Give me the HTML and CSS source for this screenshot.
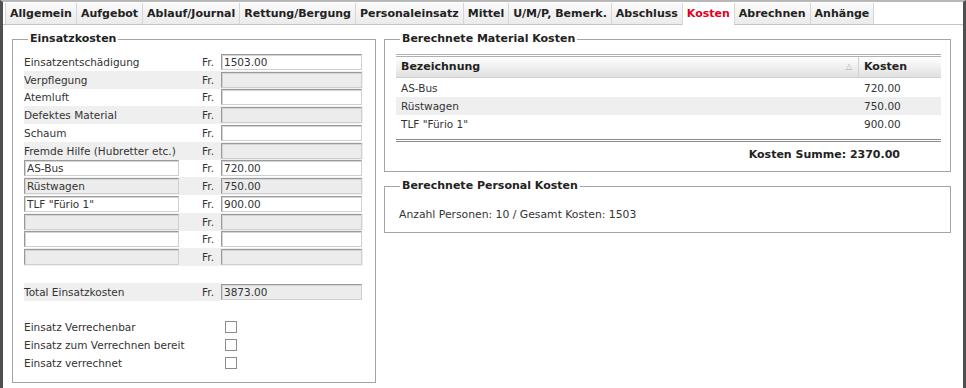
FILE: index.html
```html
<!DOCTYPE html>
<html lang="de">
<head>
    <meta charset="UTF-8">
    <title>Einsatz | Kosten</title>
    <link rel="stylesheet" href="styles.css">
</head>
<body>
<div class="frame">

    <!-- Tabs -->
    <ul class="tabs">
        <li>Allgemein</li>
        <li>Aufgebot</li>
        <li>Ablauf/Journal</li>
        <li>Rettung/Bergung</li>
        <li>Personaleinsatz</li>
        <li>Mittel</li>
        <li>U/M/P, Bemerk.</li>
        <li>Abschluss</li>
        <li class="active">Kosten</li>
        <li>Abrechnen</li>
        <li>Anhänge</li>
    </ul>

    <div class="content">

        <!-- Einsatzkosten -->
        <fieldset class="box costs">
            <legend>Einsatzkosten</legend>

            <div class="row"><span>Einsatzentschädigung</span><span class="cur">Fr.</span><input class="amount" value="1503.00"></div>
            <div class="row odd"><span>Verpflegung</span><span class="cur">Fr.</span><input class="amount"></div>
            <div class="row"><span>Atemluft</span><span class="cur">Fr.</span><input class="amount"></div>
            <div class="row odd"><span>Defektes Material</span><span class="cur">Fr.</span><input class="amount"></div>
            <div class="row"><span>Schaum</span><span class="cur">Fr.</span><input class="amount"></div>
            <div class="row odd"><span>Fremde Hilfe (Hubretter etc.)</span><span class="cur">Fr.</span><input class="amount"></div>
            <div class="row"><input class="name" value="AS-Bus"><span class="cur">Fr.</span><input class="amount" value="720.00"></div>
            <div class="row odd"><input class="name" value="Rüstwagen"><span class="cur">Fr.</span><input class="amount" value="750.00"></div>
            <div class="row"><input class="name" value='TLF "Fürio 1"'><span class="cur">Fr.</span><input class="amount" value="900.00"></div>
            <div class="row odd"><input class="name"><span class="cur">Fr.</span><input class="amount"></div>
            <div class="row"><input class="name"><span class="cur">Fr.</span><input class="amount"></div>
            <div class="row odd"><input class="name"><span class="cur">Fr.</span><input class="amount"></div>

            <div class="row odd total"><span>Total Einsatzkosten</span><span class="cur">Fr.</span><input class="amount" value="3873.00"></div>

            <div class="checks">
                <label class="row"><span>Einsatz Verrechenbar</span><span></span><span class="check"></span></label>
                <label class="row"><span>Einsatz zum Verrechnen bereit</span><span></span><span class="check"></span></label>
                <label class="row"><span>Einsatz verrechnet</span><span></span><span class="check"></span></label>
            </div>
        </fieldset>

        <div class="side">
            <!-- Material -->
            <fieldset class="box material">
                <legend>Berechnete Material Kosten</legend>
                <div class="grid">
                    <div class="grid-head">
                        <span class="col-name">Bezeichnung <i class="sort">&#9651;</i></span>
                        <span class="col-cost">Kosten</span>
                    </div>
                    <div class="grid-body">
                        <div class="grid-row"><span class="col-name">AS-Bus</span><span class="col-cost">720.00</span></div>
                        <div class="grid-row odd"><span class="col-name">Rüstwagen</span><span class="col-cost">750.00</span></div>
                        <div class="grid-row"><span class="col-name">TLF "Fürio 1"</span><span class="col-cost">900.00</span></div>
                    </div>
                </div>
                <div class="sum">Kosten Summe: 2370.00</div>
            </fieldset>

            <!-- Personal -->
            <fieldset class="box personal">
                <legend>Berechnete Personal Kosten</legend>
                <p>Anzahl Personen: 10 / Gesamt Kosten: 1503</p>
            </fieldset>
        </div>

    </div>
</div>
</body>
</html>
```

FILE: styles.css
```css
* {
    margin: 0;
    padding: 0;
    box-sizing: border-box;
}
body {
    font-family: "DejaVu Sans", Verdana, sans-serif;
    font-size: 11px;
    color: #333;
    background: #fff;
}
.frame {
    width: 966px;
    height: 388px;
    border-left: 3px solid #505050;
    border-right: 3px solid #505050;
    border-top: 2px solid #b8b8b8;
    overflow: hidden;
}
/* Tabs */
.tabs {
    list-style: none;
    display: flex;
    height: 23px;
    padding: 1px 0 0 2px;
    border-bottom: 1px solid #c4c4c4;
}
.tabs li {
    padding: 0 4px;
    line-height: 21px;
    font-weight: bold;
    color: #222;
    background: linear-gradient(#fafafa, #ebebeb);
    border-left: 1px solid #d6d6d6;
}
.tabs li:last-child {
    border-right: 1px solid #d6d6d6;
}
.tabs li.active {
    color: #e2001a;
    background: #fff;
    height: 22px;
}
/* Content */
.content {
    display: flex;
    gap: 8px;
    padding: 7px 0 0 9px;
}
.box {
    border: 1px solid #a4a4a4;
    padding: 7px 12px 0 11px;
}
.box legend {
    font-weight: bold;
    color: #222;
    line-height: 14px;
    padding: 0 2px;
    margin-left: 4px;
}
.costs {
    width: 364px;
    height: 351px;
}
.row {
    display: grid;
    grid-template-columns: 156px 41px 141px;
    align-items: center;
    height: 17.75px;
    font-size: 10.5px;
    white-space: nowrap;
}
.row.odd {
    background: #efefef;
}
.cur {
    text-align: right;
    padding-right: 7px;
}
.row input {
    height: 16px;
    font: inherit;
    color: #333;
    padding: 0 2px;
    background: #fff;
    border: 1px solid #9a9a9a;
    border-right-color: #cfcfcf;
    border-bottom-color: #cfcfcf;
    box-shadow: inset 1px 1px 0 #d4d4d4;
}
.row.odd input {
    background: #ececec;
}
.row .name {
    width: 155px;
}
.row .amount {
    width: 141px;
}
.total {
    margin-top: 17px;
    background: linear-gradient(to right, #efefef 197px, transparent 197px) !important;
}
.checks {
    margin-top: 17px;
}
.checks .row {
    height: 18px;
}
.check {
    width: 12px;
    height: 12px;
    margin-left: 4px;
    border: 1px solid #8c8c8c;
    background: #fff;
}
/* Right column */
.side {
    display: flex;
    flex-direction: column;
    gap: 7px;
}
.material {
    width: 567px;
    height: 140px;
    padding: 7px 9px 0 11px;
}
.grid {
    margin-top: 1px;
    border-top: 3px double #b0b0b0;
    border-bottom: 3px double #8a8a8a;
}
.grid-head,
.grid-row {
    display: grid;
    grid-template-columns: 1fr 83px;
}
.grid-head {
    height: 21px;
    line-height: 20px;
    font-weight: bold;
    color: #222;
    background: linear-gradient(#fff, #e0e0e0);
    border-bottom: 1px solid #d0d0d0;
}
.grid-head .col-cost {
    border-left: 1px solid #d0d0d0;
}
.col-name,
.col-cost {
    padding-left: 5px;
}
.grid-row .col-cost {
    padding-left: 6px;
}
.col-name {
    position: relative;
}
.sort {
    position: absolute;
    right: 6px;
    top: 0;
    font-style: normal;
    font-weight: normal;
    font-size: 8px;
    color: #aaa;
}
.grid-body {
    padding: 1px 0 6px;
}
.grid-row {
    height: 18px;
    line-height: 18px;
    font-size: 10.5px;
}
.grid-row.odd {
    background: #efefef;
}
.sum {
    text-align: right;
    font-weight: bold;
    color: #222;
    padding: 6px 41px 0 0;
}
.personal {
    width: 567px;
    height: 54px;
    padding: 15px 12px 0 14px;
}
.personal legend {
    margin-left: 1px;
}
.personal p {
    font-size: 10.8px;
}
```
